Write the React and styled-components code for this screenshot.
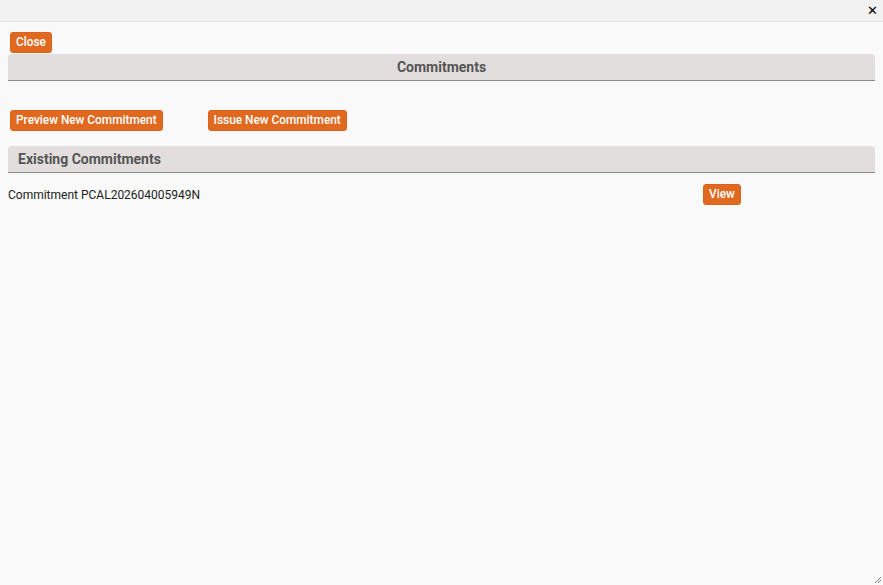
import React from "react";
import styled, { createGlobalStyle } from "styled-components";

const Global = createGlobalStyle`
  html, body { margin: 0; padding: 0; height: 100%; }
  body { background: #f9f9f9; font-family: Roboto, "Liberation Sans", Arial, sans-serif; }
  #root { height: 100%; }
`;

const Window = styled.div`
  position: relative;
  height: 585px;
  width: 883px;
  background: #f9f9f9;
  display: flex;
  flex-direction: column;
  overflow: hidden;
`;

const TitleBar = styled.div`
  height: 21px;
  background: #f2f2f2;
  border-bottom: 1px solid #e2e2e2;
  display: flex;
  justify-content: flex-end;
  align-items: center;
  padding-right: 5px;
  flex-shrink: 0;
`;

const CloseX = styled.span`
  font-family: "DejaVu Sans", sans-serif;
  font-size: 13px;
  font-weight: bold;
  color: #000;
  line-height: 1;
  cursor: pointer;
`;

const Content = styled.div`
  padding: 10px 8px 0 8px;
  display: flex;
  flex-direction: column;
`;

const Button = styled.button`
  background: #e0691f;
  color: #fff;
  border: 1px solid #d9631b;
  border-radius: 3px;
  font-family: Roboto, "Liberation Sans", Arial, sans-serif;
  font-size: 11.85px;
  font-weight: 500;
  height: 21px;
  padding: 0 5px;
  line-height: 19px;
  cursor: pointer;
  white-space: nowrap;
`;

const TopRow = styled.div`
  display: flex;
  padding-left: 2px;
  margin-bottom: 1px;
`;

const SectionHeader = styled.div`
  height: 26px;
  background: #e3dede;
  border-bottom: 1px solid #8a8a8a;
  border-radius: 4px 4px 0 0;
  display: flex;
  align-items: center;
  justify-content: ${(p) => (p.$center ? "center" : "flex-start")};
  padding: 0 10px;
  font-size: 14px;
  font-weight: bold;
  color: #555;
`;

const ActionRow = styled.div`
  display: flex;
  gap: 45px;
  padding-left: 2px;
  margin-top: 29px;
  margin-bottom: 15px;
`;

const ItemRow = styled.div`
  display: grid;
  grid-template-columns: 695px auto;
  align-items: center;
  margin-top: 11px;
`;

const ItemLabel = styled.span`
  font-size: 12px;
  color: #222;
`;

const ItemButtonCell = styled.div`
  display: flex;
`;

const ResizeGrip = styled.svg`
  position: absolute;
  right: 1px;
  bottom: 1px;
`;

export default function App() {
  return (
    <>
      <Global />
      <Window>
        <TitleBar>
          <CloseX>✕</CloseX>
        </TitleBar>
        <Content>
          <TopRow>
            <Button>Close</Button>
          </TopRow>
          <SectionHeader $center>Commitments</SectionHeader>
          <ActionRow>
            <Button>Preview New Commitment</Button>
            <Button>Issue New Commitment</Button>
          </ActionRow>
          <SectionHeader>Existing Commitments</SectionHeader>
          <ItemRow>
            <ItemLabel>Commitment PCAL202604005949N</ItemLabel>
            <ItemButtonCell>
              <Button>View</Button>
            </ItemButtonCell>
          </ItemRow>
        </Content>
        <ResizeGrip width="8" height="8" viewBox="0 0 8 8">
          <path d="M7 1 L1 7 M7 4 L4 7" stroke="#777" strokeWidth="1" />
        </ResizeGrip>
      </Window>
    </>
  );
}
